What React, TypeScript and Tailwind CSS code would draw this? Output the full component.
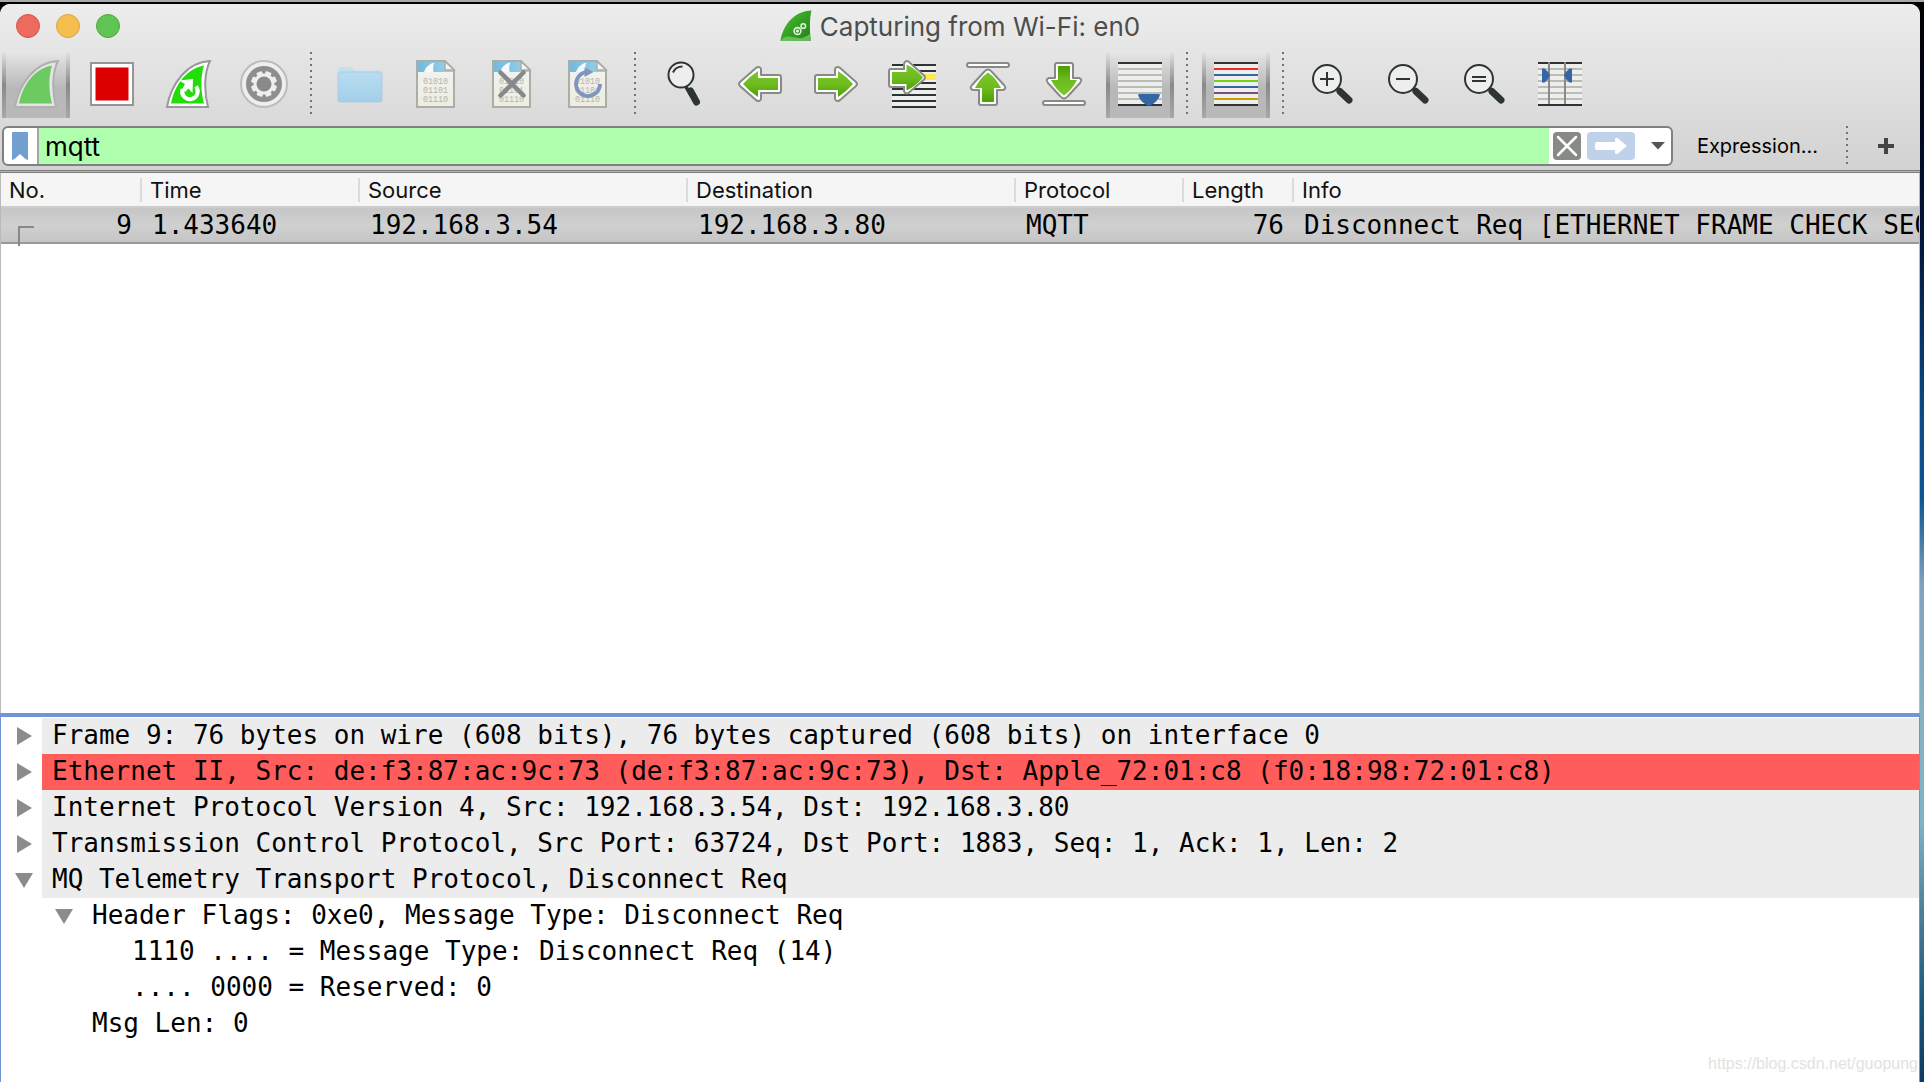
import React from "react";

const mono = "font-['DejaVu_Sans_Mono','Noto_Sans_Mono',monospace]";

function Gradients() {
  return (
    <svg className="absolute h-0 w-0" aria-hidden="true">
      <defs>
        <linearGradient id="green" x1="0" y1="0" x2="0" y2="1">
          <stop offset="0" stopColor="#7cc62f" />
          <stop offset="0.55" stopColor="#6cbb1c" />
          <stop offset="1" stopColor="#4d9d06" />
        </linearGradient>
        <linearGradient id="sky" x1="0" y1="0" x2="1" y2="0">
          <stop offset="0" stopColor="#72b9dc" />
          <stop offset="1" stopColor="#9dd3ea" />
        </linearGradient>
        <linearGradient id="paper" x1="0" y1="0" x2="0" y2="1">
          <stop offset="0" stopColor="#f3f3f3" />
          <stop offset="1" stopColor="#ededdf" />
        </linearGradient>
        <linearGradient id="folder" x1="0" y1="0" x2="0" y2="1">
          <stop offset="0" stopColor="#b9dcf0" />
          <stop offset="1" stopColor="#a3cfea" />
        </linearGradient>
        <linearGradient id="fin" x1="0" y1="0" x2="1" y2="1">
          <stop offset="0" stopColor="#4fc338" />
          <stop offset="0.6" stopColor="#2f9a20" />
          <stop offset="1" stopColor="#257f1b" />
        </linearGradient>
      </defs>
    </svg>
  );
}

function Icon({ children }: { children: React.ReactNode }) {
  return (
    <svg viewBox="0 0 48 48" className="size-12 shrink-0" aria-hidden="true">
      {children}
    </svg>
  );
}

const finOuter = "M3 47 C7 24 23 2 46 1 C40 13 40 31 44 47 Z";
const finInner = "M7 43.500 C11 24 23 8.500 40 5.500 C36.500 17 36.500 30 40 43.500 Z";

const startIcon = (
  <Icon>
    <path d={finOuter} fill="#e4e4e4" stroke="#b0b0b0" strokeWidth="2" />
    <path d={finInner} fill="#6ccb60" />
  </Icon>
);
const stopIcon = (
  <Icon>
    <rect x="3" y="3" width="42" height="42" fill="#fff" stroke="#959595" strokeWidth="2" />
    <rect x="7.500" y="7.500" width="33" height="33" fill="#dc0000" />
  </Icon>
);
const restartIcon = (
  <Icon>
    <path d={finOuter} fill="#fff" stroke="#999" strokeWidth="2" />
    <path d={finInner} fill="#22dd0a" />
    <path d="M18.500 29 A7.800 7.800 0 1 0 32 26.500" fill="none" stroke="#fff" strokeWidth="4" />
    <path d="M15 20.500 L29 19 L28.500 33 L24.500 28.500 L21 32 L18 29.500 L21 24 Z" fill="#fff" />
  </Icon>
);
const teeth = [0, 45, 90, 135];
const optionsIcon = (
  <Icon>
    <circle cx="24" cy="24" r="23" fill="#eee" stroke="#bcbcbc" strokeWidth="2" />
    <circle cx="24" cy="24" r="18" fill="#8e8e8e" />
    {teeth.map((a) => (
      <rect key={a} x="21" y="11" width="6" height="26" rx="1" fill="#eee" transform={`rotate(${a + 22} 24 24)`} />
    ))}
    <circle cx="24" cy="24" r="10.500" fill="#eee" />
    <circle cx="24" cy="24" r="7.500" fill="#8a8a8a" />
  </Icon>
);
const openIcon = (
  <Icon>
    <path d="M2 12 V9 Q2 7 4 7 H15 L19 10.500 H44 Q46 10.500 46 13 V20 H2 Z" fill="#c3e2ef" />
    <path d="M2 14 Q2 12 4 12 H44 Q46 12 46 14 V40 Q46 42 44 42 H4 Q2 42 2 40 Z" fill="url(#folder)" stroke="#a5cade" strokeWidth="0.800" />
  </Icon>
);

function Sheet({ children }: { children?: React.ReactNode }) {
  return (
    <Icon>
      <path d="M5 1 H33 L42 10 V47 H5 Z" fill="url(#paper)" stroke="#adada8" strokeWidth="2" />
      <path d="M6 2 H33 V10 H41 V12 H6 Z" fill="url(#sky)" />
      <path d="M12 12 C14 7 17.500 3.500 22.500 2.500 C21 5 21 9 21.500 12 Z" fill="#f4f9fb" />
      <path d="M33 1.500 V10 H42 Z" fill="#f6f6f2" stroke="#adada8" strokeWidth="1.500" />
      <g className="font-['Liberation_Mono',monospace]" fontSize="8.400" fill="#b4b4ac">
        <text x="11" y="24">01010</text>
        <text x="11" y="33">01101</text>
        <text x="11" y="42">01110</text>
      </g>
      {children}
    </Icon>
  );
}
const closeIcon = (
  <Sheet>
    <path d="M12.500 12.500 L35.500 35.500 M35.500 12.500 L12.500 35.500" stroke="#85898b" strokeWidth="4.500" strokeLinecap="round" />
  </Sheet>
);
const reloadIcon = (
  <Sheet>
    <path d="M36 24 A12 12 0 1 1 22 12.200" fill="none" stroke="#7e95be" strokeWidth="3.800" />
    <path d="M20.500 7.500 L29.500 12 L20.500 17 Z" fill="#7e95be" />
  </Sheet>
);
const findIcon = (
  <Icon>
    <path d="M26 27 L31 35" stroke="#2e3436" strokeWidth="3.500" />
    <path d="M30.500 31 L36.500 42" stroke="#2e3436" strokeWidth="7" strokeLinecap="round" />
    <circle cx="21" cy="15" r="12.500" fill="#eeeeec" stroke="#2e3436" strokeWidth="2" />
    <path d="M13 12.500 Q15.500 6.500 22.500 6.500" fill="none" stroke="#2e3436" strokeWidth="2" />
  </Icon>
);

const arrowOuter =
  "M5 15 H23 V9 Q24 6 27.500 7.500 L44 22 Q46 24 44 26 L27.500 40.500 Q24 42 23 39 V33 H5 Q3 33 3 31 V17 Q3 15 5 15 Z";
function Arrow({ transform }: { transform?: string }) {
  return (
    <g transform={transform}>
      <path d={arrowOuter} fill="#fff" stroke="#888a85" strokeWidth="2" strokeLinejoin="round" />
      <path d="M6 18 H26 V11 Q34 16 41 24 Q34 32 26 37 V30 H6 Z" fill="url(#green)" />
    </g>
  );
}
const backIcon = (
  <Icon>
    <Arrow transform="translate(48 0) scale(-1 1)" />
  </Icon>
);
const forwardIcon = (
  <Icon>
    <Arrow />
  </Icon>
);
function Line({ y, color }: { y: number; color: string }) {
  return <rect x="2" y={y} width="44" height="2" fill={color} />;
}
const gotoIcon = (
  <svg viewBox="-2 0 48 48" className="size-12 shrink-0" aria-hidden="true">
    <rect x="2" y="4" width="44" height="44" fill="#eeeeec" />
    <rect x="2" y="14" width="44" height="6" fill="#fce94f" />
    {[4, 10, 22, 28, 34, 40, 46].map((y) => (
      <Line key={y} y={y} color="#2e3436" />
    ))}
    <path
      d="M1 9 H14 V4 Q15 0 18.500 1.500 L34 15.500 Q36 17.500 34 19.500 L18.500 33 Q15 34.500 14 31 V27 H1 Q-1 27 -1 25 V11 Q-1 9 1 9 Z"
      fill="#fff"
      stroke="#888a85"
      strokeWidth="2"
    />
    <path d="M2 12 H16.500 V4.500 Q26 9 33 17.500 Q26 26 16.500 30.500 V24 H2 Z" fill="url(#green)" />
  </svg>
);
function VerticalArrow({ transform }: { transform?: string }) {
  return (
    <g transform={transform}>
      <rect x="3" y="3" width="42" height="4" rx="2" fill="#fff" stroke="#888a85" strokeWidth="2" />
      <path d="M24 9.500 Q26 9.500 28 12 L40 25 Q43 29 39 30 H33 V43 Q33 45 31 45 H17 Q15 45 15 43 V30 H9 Q5 29 8 25 L20 12 Q22 9.500 24 9.500 Z" fill="#fff" stroke="#888a85" strokeWidth="2" strokeLinejoin="round" />
      <path d="M24 12.500 Q32 18 37 28 H30 V42 H18 V28 H11 Q16 18 24 12.500 Z" fill="url(#green)" />
    </g>
  );
}
const firstIcon = (
  <Icon>
    <VerticalArrow />
  </Icon>
);
const lastIcon = (
  <Icon>
    <VerticalArrow transform="translate(0 48) scale(1 -1)" />
  </Icon>
);
const autoScrollIcon = (
  <Icon>
    <rect x="2" y="2" width="44" height="44" fill="#eeeeec" />
    {[8, 14, 20, 26, 32, 38].map((y) => (
      <Line key={y} y={y} color="#babdb6" />
    ))}
    <Line y={2} color="#2e3436" />
    <Line y={44} color="#2e3436" />
    <path d="M22 35 Q22 34 24 34 H42 Q44 34 44 35 Q42 41 35.500 45 Q33 46.500 30.500 45 Q24 41 22 35 Z" fill="#3465a4" />
  </Icon>
);
const lineColors = ["#2e3436", "#ef2929", "#3465a4", "#73d216", "#3465a4", "#75507b", "#c4a000", "#2e3436"];
const colorizeIcon = (
  <Icon>
    <rect x="2" y="2" width="44" height="44" fill="#eeeeec" />
    {lineColors.map((c, i) => (
      <Line key={i} y={2 + i * 6} color={c} />
    ))}
  </Icon>
);
function Magnifier({ sign }: { sign: string }) {
  return (
    <Icon>
      <path d="M28 27 L33 32" stroke="#2e3436" strokeWidth="4" />
      <path d="M32 31.500 L41 40" stroke="#2e3436" strokeWidth="7" strokeLinecap="round" />
      <circle cx="19" cy="19" r="14" fill="#eeeeec" stroke="#2e3436" strokeWidth="2" />
      <path d={sign} stroke="#2e3436" strokeWidth="2" />
    </Icon>
  );
}
const resizeIcon = (
  <Icon>
    <rect x="2" y="2" width="44" height="44" fill="#eeeeec" />
    {[8, 14, 20, 26, 32, 38].map((y) => (
      <Line key={y} y={y} color="#babdb6" />
    ))}
    <Line y={2} color="#2e3436" />
    <Line y={44} color="#2e3436" />
    <rect x="12" y="2" width="2" height="42" fill="#888a85" />
    <rect x="28" y="2" width="2" height="42" fill="#888a85" />
    <path d="M6 8.500 H8.500 Q12 11 14 15.500 Q12 20 8.500 22.500 H6 Z" fill="#3465a4" />
    <path d="M36 8.500 H33.500 Q30 11 28 15.500 Q30 20 33.500 22.500 H36 Z" fill="#3465a4" />
  </Icon>
);

type Tool = { label: string; icon: React.ReactNode; pressed?: boolean; disabled?: boolean };
const toolGroups: Tool[][] = [
  [
    { label: "Start capturing packets", icon: startIcon, pressed: true, disabled: true },
    { label: "Stop capturing packets", icon: stopIcon },
    { label: "Restart current capture", icon: restartIcon },
    { label: "Capture options", icon: optionsIcon, disabled: true },
  ],
  [
    { label: "Open a capture file", icon: openIcon, disabled: true },
    { label: "Save this capture file", icon: <Sheet />, disabled: true },
    { label: "Close this capture file", icon: closeIcon, disabled: true },
    { label: "Reload this file", icon: reloadIcon, disabled: true },
  ],
  [
    { label: "Find a packet", icon: findIcon },
    { label: "Go back", icon: backIcon },
    { label: "Go forward", icon: forwardIcon },
    { label: "Go to packet", icon: gotoIcon },
    { label: "Go to first packet", icon: firstIcon },
    { label: "Go to last packet", icon: lastIcon },
    { label: "Auto scroll", icon: autoScrollIcon, pressed: true },
  ],
  [{ label: "Colorize packets", icon: colorizeIcon, pressed: true }],
  [
    { label: "Zoom in", icon: <Magnifier sign="M12 19 H26 M19 12 V26" /> },
    { label: "Zoom out", icon: <Magnifier sign="M12 19 H26" /> },
    { label: "Normal size", icon: <Magnifier sign="M12 17 H26 M12 21 H26" /> },
    { label: "Resize columns", icon: resizeIcon },
  ],
];

function ToolButton({ label, icon, pressed, disabled }: Tool) {
  return (
    <button
      type="button"
      aria-label={label}
      aria-pressed={pressed}
      disabled={disabled}
      className={
        pressed
          ? "relative flex h-[66px] w-[68px] shrink-0 items-center justify-center bg-linear-to-b from-[#e6e6e6] via-[#b8b8b8] via-55% to-[#b9b9b9] pb-0.5"
          : "flex h-[66px] w-[68px] shrink-0 items-center justify-center pb-0.5"
      }
    >
      {pressed && (
        <span className="absolute inset-0 flex justify-between">
          <span className="w-1 bg-linear-to-b from-[#e2e2e2] via-[#8a8a8a] to-[#a8a8a8]" />
          <span className="w-1 bg-linear-to-b from-[#e2e2e2] via-[#8a8a8a] to-[#a8a8a8]" />
        </span>
      )}
      <span className="relative">{icon}</span>
    </button>
  );
}

function Dots({ tall }: { tall?: boolean }) {
  return (
    <span className="flex w-3 shrink-0 pl-1" role="separator">
      <span
        className={
          tall
            ? "h-[62px] w-0.5 bg-[repeating-linear-gradient(to_bottom,#737373_0_2px,transparent_2px_6px)]"
            : "h-10 w-0.5 bg-[repeating-linear-gradient(to_bottom,#737373_0_2px,transparent_2px_6px)]"
        }
      />
    </span>
  );
}

function TitleBar() {
  return (
    <div className="grid h-11 grid-cols-[1fr_auto_1fr] items-center">
      <div className="flex gap-4 pl-4">
        <button type="button" aria-label="Close" className="size-6 rounded-full border border-[#d8524a] bg-[#ec6a5e]" />
        <button type="button" aria-label="Minimize" className="size-6 rounded-full border border-[#dba33c] bg-[#f5bf4f]" />
        <button type="button" aria-label="Zoom" className="size-6 rounded-full border border-[#4fa73e] bg-[#61c554]" />
      </div>
      <div className="flex items-center gap-2">
        <svg viewBox="0 0 32 32" className="size-8" aria-hidden="true">
          <path d="M0.500 31 C3 15 14 1 31.500 0.500 C29.500 8 29.500 22 31 31 Z" fill="url(#fin)" />
          <path d="M1 31 Q3 26 9 26.500 T19 28 T30 24 L31 31 Z" fill="#7fcf73" opacity="0.700" />
          <g fill="none" stroke="#dff3da" strokeWidth="1.600">
            <circle cx="17.500" cy="21" r="3.400" />
            <circle cx="17.500" cy="21" r="0.800" />
            <circle cx="23.300" cy="16" r="2.300" />
          </g>
        </svg>
        <h1 className="pt-0.5 text-[26px] leading-8 text-[#4d4d4d]">Capturing from Wi-Fi: en0</h1>
      </div>
    </div>
  );
}

function Toolbar() {
  return (
    <div role="toolbar" aria-label="Main toolbar" className="flex h-[70px] items-start gap-2 pt-1 pl-0.5">
      {toolGroups.map((group, i) => (
        <React.Fragment key={i}>
          {i > 0 && <Dots tall />}
          {group.map((tool) => (
            <ToolButton key={tool.label} {...tool} />
          ))}
        </React.Fragment>
      ))}
    </div>
  );
}

function FilterBar() {
  return (
    <div className="flex items-center pt-2 pb-1 pl-0.5">
      <div className="flex h-10 flex-1 overflow-hidden rounded-md border-2 border-[#808080] bg-white">
        <button type="button" aria-label="Filter bookmarks" className="flex w-[35px] items-center justify-center border-r-2 border-[#a5a5a5] pr-0.5">
          <svg viewBox="0 0 16 28" className="h-7 w-4" aria-hidden="true">
            <path d="M1 0 H15 Q16 0 16 1 V28 L13.500 27 L8 22 L2.500 27 L0 28 V1 Q0 0 1 0 Z" fill="#729fcf" />
          </svg>
        </button>
        <input
          type="text"
          aria-label="Display filter"
          defaultValue="mqtt"
          className="min-w-0 flex-1 bg-[#afffaf] px-1.5 text-[26px] text-black outline-none"
        />
        <div className="flex items-center gap-1.5 pr-0.5 pl-1">
          <button type="button" aria-label="Clear filter" className="flex size-7 items-center justify-center rounded bg-[#888a85]">
            <svg viewBox="0 0 28 28" className="size-7" aria-hidden="true">
              <path d="M5 5 L23 23 M23 5 L5 23" stroke="#fff" strokeWidth="2.500" strokeLinecap="round" />
            </svg>
          </button>
          <button type="button" aria-label="Apply filter" className="rounded bg-[#bfd2ea]">
            <svg viewBox="0 0 48 28" className="h-7 w-12" aria-hidden="true">
              <path d="M10 10 H28 V7 Q29 5 31 6.500 L40 14 L31 21.500 Q29 23 28 21 V18 H10 Q8 18 8 16 V12 Q8 10 10 10 Z" fill="#fff" />
            </svg>
          </button>
          <button type="button" aria-label="Recent filters" className="flex w-7 justify-end">
            <svg viewBox="0 0 14 8" className="mr-1 h-2 w-3.5" aria-hidden="true">
              <path d="M0 0 H14 L7 7.500 Z" fill="#555753" />
            </svg>
          </button>
        </div>
      </div>
      <div className="flex items-center pr-[18px] pl-6">
        <button type="button" className="pr-6 text-xl leading-8 text-black">
          Expression…
        </button>
        <Dots />
        <button type="button" aria-label="Add a display filter button" className="ml-4 flex size-8 items-center justify-center">
          <svg viewBox="0 0 16 16" className="size-4" aria-hidden="true">
            <path d="M0 8 H16 M8 0 V16" stroke="#444" strokeWidth="4" />
          </svg>
        </button>
      </div>
    </div>
  );
}

const columns = [
  { name: "No.", value: "9", width: "w-[141px]", right: true },
  { name: "Time", value: "1.433640", width: "w-[218px]" },
  { name: "Source", value: "192.168.3.54", width: "w-[328px]" },
  { name: "Destination", value: "192.168.3.80", width: "w-[328px]" },
  { name: "Protocol", value: "MQTT", width: "w-[168px]" },
  { name: "Length", value: "76", width: "w-[110px]", right: true },
  { name: "Info", value: "Disconnect Req [ETHERNET FRAME CHECK SEQUENCE INCORRECT]", width: "w-auto" },
];

function PacketList() {
  return (
    <div className="relative min-h-0 flex-1 overflow-hidden border-x border-[#b9b9b9] bg-white">
      <table className="w-full table-fixed border-collapse">
        <colgroup>
          {columns.map((c) => (
            <col key={c.name} className={c.width} />
          ))}
        </colgroup>
        <thead>
          <tr className="h-[34px] border-b-2 border-[#cccccc] bg-[#f5f5f5]">
            {columns.map((c, i) => (
              <th key={c.name} scope="col" className="p-0 text-left font-normal">
                <div
                  className={
                    i < columns.length - 1
                      ? "h-6 border-r-2 border-[#dcdcdc] pl-2 text-[22px] leading-6 text-[#111]"
                      : "h-6 pl-2 text-[22px] leading-6 text-[#111]"
                  }
                >
                  {c.name}
                </div>
              </th>
            ))}
          </tr>
        </thead>
        <tbody>
          <tr className={`h-9 border-y-2 border-[#999] bg-linear-to-b from-[#c6c6c6] via-[#d0d0d0] to-[#c6c6c6] text-[26px] leading-8 text-black ${mono}`}>
            {columns.map((c) => (
              <td key={c.name} className={c.right ? "overflow-hidden py-0 pr-2.5 text-right" : "overflow-hidden py-0 pl-2.5 whitespace-nowrap"}>
                {c.value}
              </td>
            ))}
          </tr>
        </tbody>
      </table>
      <span className="absolute top-[53px] left-[17px] h-5 w-4 border-t-2 border-l-2 border-[#888]" />
    </div>
  );
}

type Node = { text: string; level: number; open?: boolean; tone?: "grey" | "red" };
const nodes: Node[] = [
  { text: "Frame 9: 76 bytes on wire (608 bits), 76 bytes captured (608 bits) on interface 0", level: 0, open: false, tone: "grey" },
  { text: "Ethernet II, Src: de:f3:87:ac:9c:73 (de:f3:87:ac:9c:73), Dst: Apple_72:01:c8 (f0:18:98:72:01:c8)", level: 0, open: false, tone: "red" },
  { text: "Internet Protocol Version 4, Src: 192.168.3.54, Dst: 192.168.3.80", level: 0, open: false, tone: "grey" },
  { text: "Transmission Control Protocol, Src Port: 63724, Dst Port: 1883, Seq: 1, Ack: 1, Len: 2", level: 0, open: false, tone: "grey" },
  { text: "MQ Telemetry Transport Protocol, Disconnect Req", level: 0, open: true, tone: "grey" },
  { text: "Header Flags: 0xe0, Message Type: Disconnect Req", level: 1, open: true },
  { text: "1110 .... = Message Type: Disconnect Req (14)", level: 2 },
  { text: ".... 0000 = Reserved: 0", level: 2 },
  { text: "Msg Len: 0", level: 1 },
];
const indents = ["pl-0", "pl-10", "pl-20"];
const tones = { grey: "bg-[#ececec]", red: "bg-[#ff5c5c]" };

function PacketDetails() {
  return (
    <div className="overflow-hidden border-x border-t-4 border-[#7094d6] bg-white pt-px pb-10">
      <ul role="tree" aria-label="Packet details" className={`text-[26px] text-black ${mono}`}>
        {nodes.map((n) => (
          <li key={n.text} role="treeitem" aria-level={n.level + 1} aria-expanded={n.open} className={`flex h-9 ${indents[n.level]}`}>
            <span className="flex w-[41px] shrink-0 items-center pl-3.5">
              {n.open !== undefined && (
                <button type="button" aria-label={n.open ? "Collapse" : "Expand"}>
                  <svg viewBox="0 0 18 18" className="size-[18px]" aria-hidden="true">
                    <path d={n.open ? "M0 2 H18 L9 17 Z" : "M2 0 L17 9 L2 18 Z"} fill="#8c8c8c" />
                  </svg>
                </button>
              )}
            </span>
            <span className={`flex-1 pl-2.5 leading-[34px] whitespace-nowrap ${n.tone ? tones[n.tone] : ""}`}>{n.text}</span>
          </li>
        ))}
      </ul>
    </div>
  );
}

export default function App() {
  return (
    <div className="relative flex h-screen flex-col overflow-hidden border-t-2 border-[#a9a9ad] bg-[linear-gradient(to_bottom,#000_0%,#00061c_10%,#03173a_22%,#0b4b85_38%,#0d5594_46%,#7fa3bf_54%,#86b0c2_66%,#7db4c8_76%,#4c8298_84%,#1c557c_93%,#0e3a66_100%)] pt-0.5 pr-1 font-[Inter,'Liberation_Sans',sans-serif]">
      <Gradients />
      <div className="flex min-h-0 flex-1 flex-col overflow-hidden rounded-t-[10px] bg-white">
        <header className="bg-linear-to-b from-[#ededed] to-[#d2d2d2]">
          <TitleBar />
          <Toolbar />
          <FilterBar />
        </header>
        <div className="h-[3px] shrink-0 border-y border-[#7c7c7c] bg-[#b5b5b5]" />
        <PacketList />
        <PacketDetails />
      </div>
      <span className="absolute right-1.5 bottom-1.5 font-['Liberation_Sans',sans-serif] text-base text-[#e2e2e2]">
        https://blog.csdn.net/guopung
      </span>
    </div>
  );
}
